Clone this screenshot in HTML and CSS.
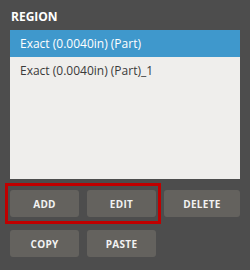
FILE: index.html
```html
<!DOCTYPE html>
<html>
<head>
<meta charset="utf-8">
<link rel="stylesheet" href="styles.css">
</head>
<body>
<div class="panel">
  <div class="title">REGION</div>
  <div class="list">
    <div class="item selected">Exact (0.0040in) (Part)</div>
    <div class="item">Exact (0.0040in) (Part)_1</div>
  </div>
  <div class="buttons">
    <button class="btn">ADD</button>
    <button class="btn">EDIT</button>
    <button class="btn">DELETE</button>
    <button class="btn">COPY</button>
    <button class="btn">PASTE</button>
  </div>
  <div class="highlight"></div>
</div>
</body>
</html>
```
FILE: styles.css
```css
html, body {
  margin: 0;
  padding: 0;
  background: #4d4d4d;
}
.panel {
  position: relative;
  width: 250px;
  height: 270px;
  padding: 10px 10px 0 10px;
  box-sizing: border-box;
  font-family: "Open Sans", sans-serif;
}
.title {
  color: #ffffff;
  font-weight: bold;
  font-size: 12px;
  line-height: 14px;
  height: 20px;
  padding-left: 1px;
}
.list {
  background: #efeeec;
  height: 149px;
}
.item {
  height: 27px;
  line-height: 27px;
  padding-left: 10px;
  font-size: 12px;
  color: #3a3a3a;
}
.item.selected {
  background: #3f98cc;
  color: #ffffff;
}
.buttons {
  display: grid;
  grid-template-columns: 69px 69px 1fr;
  column-gap: 8px;
  row-gap: 13px;
  margin-top: 11px;
}
.btn {
  height: 27px;
  border: none;
  border-radius: 3px;
  background: #64625e;
  color: #f2f2f2;
  font-family: "Open Sans", sans-serif;
  font-weight: bold;
  font-size: 10px;
  letter-spacing: 0.3px;
  padding: 0;
}
.highlight {
  position: absolute;
  left: 5px;
  top: 183px;
  width: 156px;
  height: 41px;
  box-sizing: border-box;
  border: 3px solid #c00000;
}
```
